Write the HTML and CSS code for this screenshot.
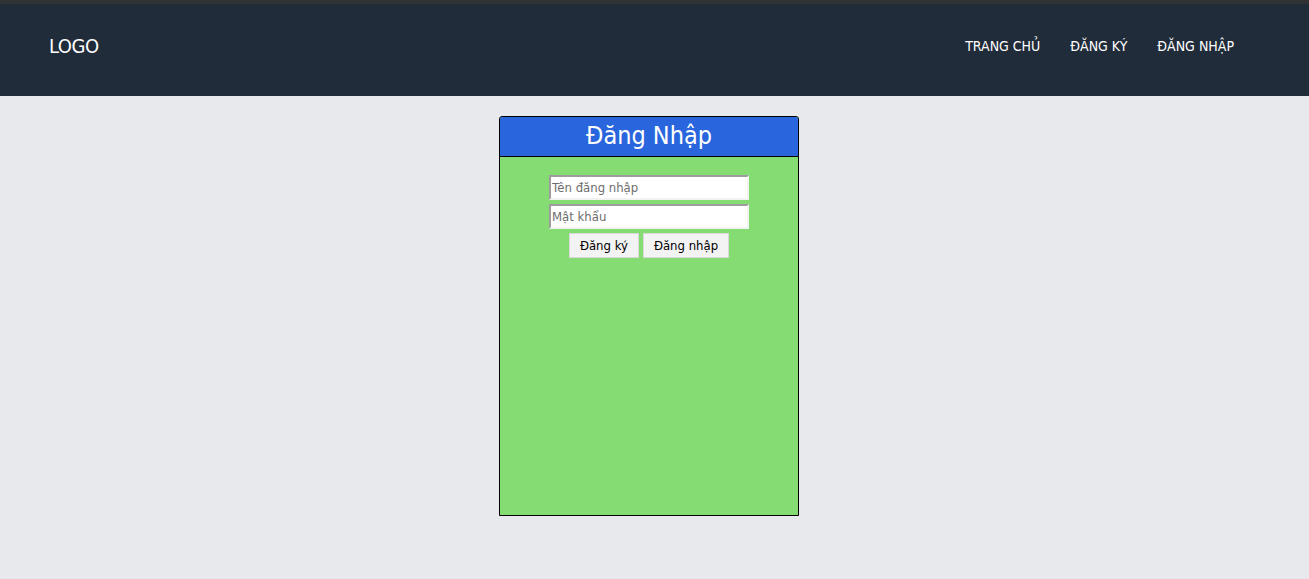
FILE: index.html
```html
<!DOCTYPE html>
<html lang="vi">
<head>
<meta charset="utf-8">
<title>Đăng Nhập</title>
<link rel="stylesheet" href="styles.css">
</head>
<body>
<div class="topline"></div>
<header class="header">
  <div class="logo">LOGO</div>
  <nav class="nav">
    <a href="#">TRANG CHỦ</a>
    <a href="#">ĐĂNG KÝ</a>
    <a href="#">ĐĂNG NHẬP</a>
  </nav>
</header>
<main class="main">
  <div class="card">
    <div class="card-title">Đăng Nhập</div>
    <form class="card-body">
      <input class="field" type="text" placeholder="Tên đăng nhập">
      <input class="field" type="password" placeholder="Mật khẩu">
      <div class="actions">
        <button type="button" class="btn">Đăng ký</button>
        <button type="button" class="btn">Đăng nhập</button>
      </div>
    </form>
  </div>
</main>
</body>
</html>
```

FILE: styles.css
```css
html, body {
  margin: 0;
  padding: 0;
}
body {
  background: #e8e9ec;
  font-family: "DejaVu Sans Condensed", "DejaVu Sans", sans-serif;
  height: 579px;
}
.topline {
  height: 4px;
  background: #303234;
}
.header {
  height: 92px;
  background: #212c3a;
  display: flex;
  align-items: center;
  justify-content: space-between;
  padding: 0 75px 0 49px;
  box-sizing: border-box;
}
.logo {
  color: #fff;
  font-size: 20px;
  letter-spacing: -0.5px;
  margin-top: -8px;
}
.nav {
  display: flex;
  gap: 30px;
  margin-top: -8px;
}
.nav a {
  color: #fff;
  text-decoration: none;
  font-size: 14px;
}
.main {
  display: flex;
  justify-content: center;
  padding: 20px 11px 0 0;
}
.card {
  width: 300px;
  height: 400px;
  box-sizing: border-box;
  border: 1px solid #000;
  border-radius: 3px 3px 0 0;
  background: #84dc72;
  overflow: hidden;
}
.card-title {
  height: 40px;
  box-sizing: border-box;
  background: #2966dd;
  border-bottom: 1px solid #000;
  color: #fff;
  font-size: 25px;
  text-align: center;
  line-height: 38px;
}
.card-body {
  display: flex;
  flex-direction: column;
  align-items: center;
  padding-top: 18px;
  gap: 4px;
  margin: 0;
}
.field {
  width: 200px;
  height: 25px;
  box-sizing: border-box;
  border: 2px solid #f2f2f2;
  border-top-color: #9c9c9c;
  border-left-color: #9c9c9c;
  padding: 0 1px;
  font-family: inherit;
  font-size: 13px;
  background: #fff;
}
.field::placeholder {
  color: #6d6d6d;
}
.actions {
  display: flex;
  gap: 4px;
  margin-top: 0;
}
.btn {
  height: 25px;
  padding: 0 10px;
  background: #f3f3f3;
  border: 1px solid #d8d8d8;
  font-family: inherit;
  font-size: 13px;
  color: #000;
}
```
